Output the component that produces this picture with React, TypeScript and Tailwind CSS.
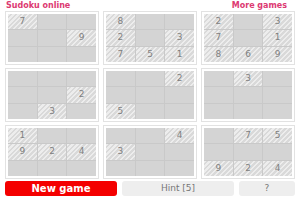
import React from "react";

type Cell = string | null;

const boxes: Cell[][] = [
  ["7", null, null, null, null, "9", null, null, null],
  ["8", null, null, "2", null, "3", "7", "5", "1"],
  ["2", null, "3", "7", null, "1", "8", "6", "9"],
  [null, null, null, null, null, "2", null, "3", null],
  [null, null, "2", null, null, null, "5", null, null],
  [null, "3", null, null, null, null, null, null, null],
  ["1", null, null, "9", "2", "4", null, null, null],
  [null, null, "4", "3", null, null, null, null, null],
  [null, "7", "5", null, null, null, "9", "2", "4"],
];

function Box({ cells }: { cells: Cell[] }) {
  return (
    <div className="border border-[#e2e2e2] p-[2px] bg-white">
      <div className="grid grid-cols-3 grid-rows-3 gap-px bg-[#c9c9c9] h-[48px]">
        {cells.map((c, i) =>
          c ? (
            <div
              key={i}
              className="flex items-center justify-center text-[9px] text-[#808080] bg-[repeating-linear-gradient(135deg,#ededed_0px,#ededed_1.5px,#d9d9d9_1.5px,#d9d9d9_3.5px)]"
            >
              {c}
            </div>
          ) : (
            <div key={i} className="bg-[#d4d4d4]" />
          )
        )}
      </div>
    </div>
  );
}

export default function App() {
  return (
    <div
      className="w-[300px] h-[200px] bg-white px-[5px] overflow-hidden"
      style={{ fontFamily: '"DejaVu Sans", Verdana, sans-serif' }}
    >
      <div className="flex justify-between items-center h-[11px] pl-[1px] pr-[8px] text-[8px] font-bold text-[#dc3a72] leading-none">
        <span>Sudoku online</span>
        <span>More games</span>
      </div>
      <div className="grid grid-cols-3 gap-x-[4px] gap-y-[3px]">
        {boxes.map((b, i) => (
          <Box key={i} cells={b} />
        ))}
      </div>
      <div className="flex gap-[5px] mt-[2px] h-[15px]">
        <button className="flex-[2] rounded-[3px] bg-[#f40000] text-white text-[10px] font-bold leading-none">
          New game
        </button>
        <button className="flex-[2] rounded-[3px] bg-[#eeeeee] text-[#777] text-[9px] leading-none">
          Hint [5]
        </button>
        <button className="flex-1 rounded-[3px] bg-[#eeeeee] text-[#777] text-[9px] leading-none">
          ?
        </button>
      </div>
    </div>
  );
}
